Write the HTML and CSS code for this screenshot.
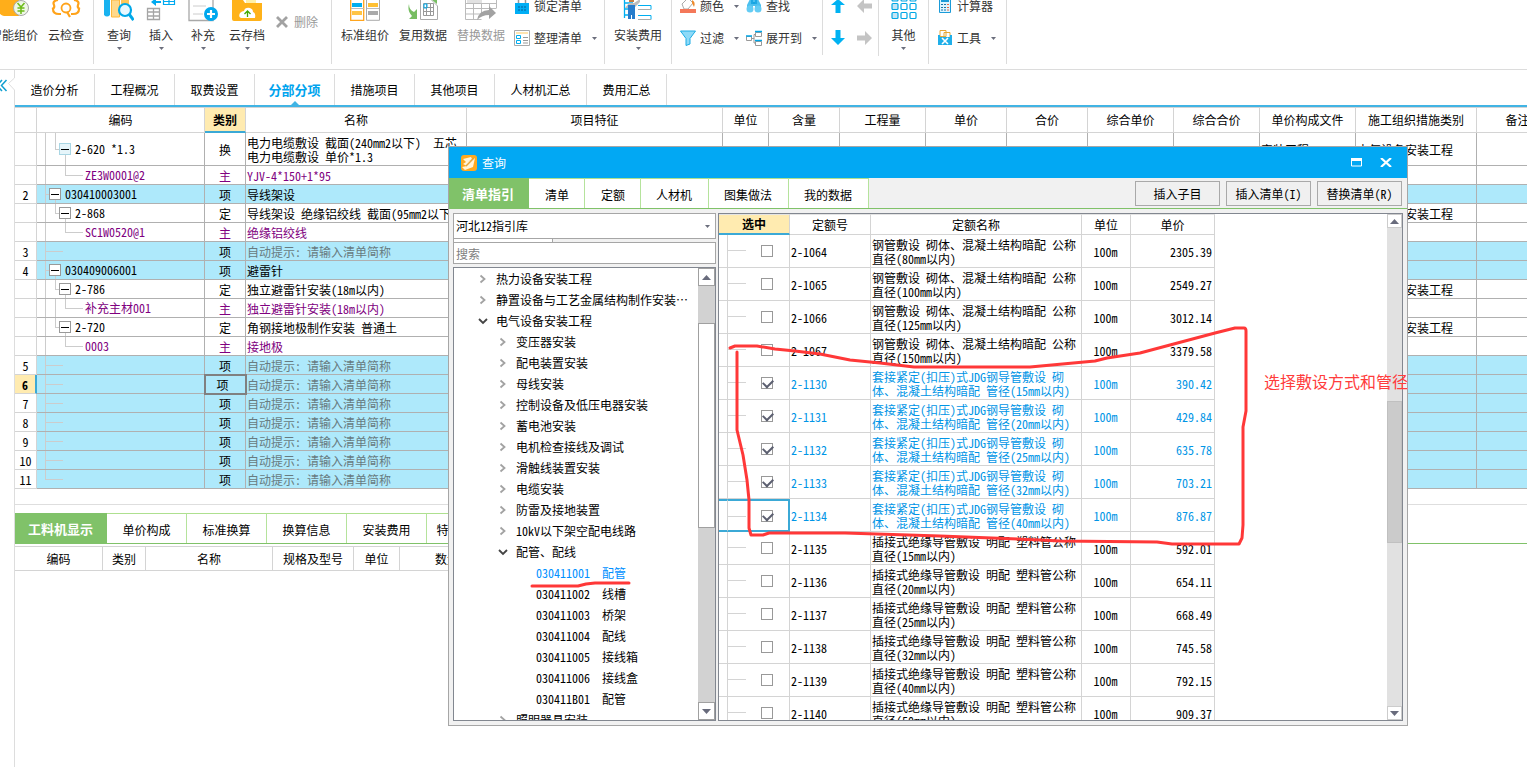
FILE: index.html
```html
<!DOCTYPE html>
<html lang="zh-CN">
<head>
<meta charset="utf-8">
<title>分部分项 - 查询</title>
<link rel="stylesheet" href="styles.css">
</head>
<body>
<svg class="defs" aria-hidden="true">
  <symbol id="down" viewBox="0 0 5 3"><path d="M0 0h5L2.500 3z" fill="#6b6e7c"/></symbol>
  <symbol id="chev" viewBox="0 0 8 10"><path d="M1.500 1.500L5.500 5l-4 3.500" fill="none" stroke="#a2a2a2" stroke-width="1.800"/></symbol>
  <symbol id="open" viewBox="0 0 10 8"><path d="M1 2l4 4 4-4" fill="none" stroke="#444" stroke-width="1.800"/></symbol>
  <symbol id="sb-up" viewBox="0 0 9 5"><path d="M4.500 0L9 5H0z" fill="#686b7c"/></symbol>
  <symbol id="sb-down" viewBox="0 0 9 5"><path d="M0 0h9L4.500 5z" fill="#686b7c"/></symbol>
</svg>

<header class="toolbar">
  <div class="group g-price">
    <button class="big"><svg width="30" height="22" viewBox="0 0 30 22"><path d="M0 0h20v16H7Q0 16 0 10z" fill="#ffae1a"/><circle cx="22" cy="8" r="7.500" fill="#eef7e6" stroke="#a8a8a8"/><path d="M18.500 3l3.500 4 3.500-4M22 7v7M18.500 8h7M18.500 11h7" fill="none" stroke="#6dbb1a" stroke-width="1.500"/></svg><span>智能组价</span></button>
    <button class="big"><svg width="32" height="22" viewBox="0 0 32 22"><path d="M8 0Q2 1 4 5q1 3-2 4M24 0q6 1 4 5-1 3 2 4M3 9q0 5 6 5h2M29 9q0 5-6 5h-2" fill="none" stroke="#ffa31a" stroke-width="2.200"/><circle cx="16" cy="8" r="4.500" fill="none" stroke="#ffa31a" stroke-width="1.800"/><path d="M17 12l3 5" stroke="#ffa31a" stroke-width="2.200"/></svg><span>云检查</span></button>
  </div>
  <div class="group g-edit">
    <button class="big"><svg width="30" height="22" viewBox="0 0 30 22"><path d="M0 0h6v15q-3 3-6 0z" fill="#18b2f0"/><path d="M7.500 0h8v17h-8z" fill="#ffd98c" stroke="#ffb83c"/><path d="M17 0h8v4h-8z" fill="#ffc859"/><circle cx="21" cy="10" r="6" fill="#e8f8ff" stroke="#00a8e8" stroke-width="2.200"/><path d="M25 14l4.500 6" stroke="#00a8e8" stroke-width="3"/></svg><span>查询</span><svg class="arr"><use href="#down"/></svg></button>
    <button class="big"><svg width="30" height="22" viewBox="0 0 30 22"><path d="M1.500 8.500h12v11h-12zM1.500 12h12M1.500 16h12M7.500 8v12" fill="#fff" stroke="#a5a5a5" stroke-width="1.300"/><path d="M5 2l5-4v3h5v2h-5v3z" fill="#00aaf0"/><path d="M17.500-1h11v5.500h-11zM17 1.500h12M23-1v5" fill="none" stroke="#00aaf0" stroke-width="1.200"/></svg><span>插入</span><svg class="arr"><use href="#down"/></svg></button>
    <button class="big"><svg width="30" height="22" viewBox="0 0 30 22"><path d="M1 0v20.500h24V0" fill="#fff" stroke="#a8a8a8" stroke-width="1.300"/><path d="M5 6h13M5 14h10" stroke="#ccc"/><circle cx="23" cy="14" r="7" fill="#00a8ee"/><path d="M19 14h8M23 10v8" stroke="#fff" stroke-width="2.200"/></svg><span>补充</span><svg class="arr"><use href="#down"/></svg></button>
    <button class="big cloud"><svg width="30" height="22" viewBox="0 0 30 22"><path d="M0 0h11l2 3h17v16q0 2-2 2H2q-2 0-2-2z" fill="#ffb219"/><path d="M14 0h10v3H14z" fill="#fff0a8"/><path d="M9 18q-3-1-1-5 2-2 4-2 1-4 6-3 3 1 3 4 3 1 2 6z" fill="#fff"/><path d="M15.500 17v-5M12.500 14l3-3 3 3" fill="none" stroke="#42a800" stroke-width="1.300"/></svg><span>云存档</span><svg class="arr"><use href="#down"/></svg></button>
    <button class="small muted del"><svg width="12" height="12" viewBox="0 0 12 12"><path d="M1 1l10 10M11 1L1 11" stroke="#a2a2a2" stroke-width="2.800"/></svg><span>删除</span></button>
  </div>
  <div class="group g-data">
    <button class="big"><svg width="30" height="22" viewBox="0 0 30 22"><path d="M.7-1h13v21.300H.7z" fill="#fff" stroke="#ffa51e" stroke-width="1.300"/><path d="M1 8.500h13M17 8.500h13" stroke="#bbb"/><path d="M2 3h10v4H2z" fill="#00aef0"/><path d="M2 11h10v4H2z" fill="#ffc445"/><path d="M16.500-1h13v21.300h-13z" fill="none" stroke="#aaa"/><path d="M18 11h10v4H18z" fill="#aaa"/><path d="M18 3h10v4H18z" fill="#ffc033"/></svg><span>标准组价</span></button>
    <button class="big"><svg width="30" height="22" viewBox="0 0 30 22"><path d="M12.500 0v19.500h17V6l-6-6" fill="#fff" stroke="#aaa"/><path d="M15.500 3.500h10v12h-10zM15.500 7.500h10M15.500 11.500h10M18.500 3v13M22.500 3v13" fill="none" stroke="#999"/><path d="M16 4h3v4h-3z" fill="none" stroke="#00aef0"/><path d="M1 4q0 6 5 8l3-3v10H1l3-3Q-1 11 1 4zM23-1l6 5V-1z" fill="#77bd62"/></svg><span>复用数据</span></button>
    <button class="big muted"><svg width="32" height="22" viewBox="0 0 32 22"><path d="M.5 0v19.500h16M.5 3.500h31M.5 8.500h31M.5 14h16M8.500 3v17M16.500 3v12M24.500 3v8M31.500 0v8" fill="none" stroke="#bbb"/><path d="M2-2h15v5H2z" fill="#e2e2e2"/><path d="M12 20q2-10 12-10V6l7 7-7 6v-4q-7 0-12 5z" fill="#a2a2a2"/></svg><span>替换数据</span></button>
    <div class="rows">
      <button class="small"><svg width="16" height="16" viewBox="0 0 16 16"><path d="M4.500 6V3q0-4 3.500-4t3.500 4v3" fill="none" stroke="#999" stroke-width="1.500"/><path d="M1 5h14v11H1z" fill="#00aef5"/><path d="M4 9h2m1 0h2m1 0h2M4 12h2m1 0h2m1 0h2" stroke="#075f98"/></svg><span>锁定清单</span></button>
      <button class="small"><svg width="16" height="16" viewBox="0 0 16 16"><path d="M.5.500h15v15H.5z" fill="#fff" stroke="#aaa"/><path d="M2 2h12v2H2z" fill="#ffe4b0"/><path d="M2.500 5.500h4v3h-4zM2.500 10.500h4v3h-4z" fill="#fff" stroke="#00aef0"/><path d="M9 7.500h5M9 10.500h5M9 13h5" stroke="#999"/></svg><span>整理清单</span><svg class="arr"><use href="#down"/></svg></button>
    </div>
  </div>
  <div class="group g-fee">
    <button class="big"><svg width="30" height="22" viewBox="0 0 30 22"><path d="M1.500 0v18M1 3h9M1 9h9M1 15h5" fill="none" stroke="#00aef0" stroke-width="1.300"/><path d="M15 5.500h13v4M15 15.500h13v4" fill="none" stroke="#00aef0"/><path d="M15 9.500h13M15 19.500h13" stroke="#aaa"/><path d="M6 0h5v2H6z" fill="#c67c3e"/><path d="M2 8l4-5h5l6-4v3l-6 6H4z" fill="#bcbcbc"/><path d="M5 5h7v14H9v-4H8v4H5z" fill="#267ccc"/></svg><span>安装费用</span><svg class="arr"><use href="#down"/></svg></button>
  </div>
  <div class="group g-find">
    <div class="rows">
      <button class="small"><svg width="16" height="14" viewBox="0 0 16 14"><path d="M2 5l6-6 5 5-5 6H4z" fill="#fff" stroke="#aaa"/><path d="M12 1q4 2 2 7l-2-4z" fill="#ef8a2b"/><path d="M0 10h16v4H0z" fill="#f4785a"/></svg><span>颜色</span><svg class="arr"><use href="#down"/></svg></button>
      <button class="small"><svg width="16" height="16" viewBox="0 0 16 16"><path d="M.5 1h15L10 8.500V14l-4 1.500v-7z" fill="#8edaf8" stroke="#1cabe4"/></svg><span>过滤</span><svg class="arr"><use href="#down"/></svg></button>
    </div>
    <div class="rows">
      <button class="small"><svg width="16" height="14" viewBox="0 0 16 14"><path d="M4 0h8l3 6v6H9V7H7v5H1V6z" fill="#4bc0ef"/><circle cx="4" cy="10" r="3.500" fill="#64ccf4"/><circle cx="12" cy="10" r="3.500" fill="#64ccf4"/><path d="M6 0v5M10 0v5M7 4h2" stroke="#079bdd" stroke-width="1.300"/></svg><span>查找</span></button>
      <button class="small"><svg width="16" height="16" viewBox="0 0 16 16"><path d="M.5 6.500h5v4h-5zM9.500 2.500h6v4h-6zM9.500 11.500h6v4h-6zM6 8.500h2v-4h1M8 8v5h1" fill="#fff" stroke="#999"/><path d="M0 6h6M9 1.500h7M9 10.500h7" stroke="#00a6e7" stroke-width="1.600"/></svg><span>展开到</span><svg class="arr"><use href="#down"/></svg></button>
    </div>
  </div>
  <div class="group short g-move">
    <button aria-label="上移"><svg width="14" height="14" viewBox="0 0 14 14"><path d="M7 0l7 6H9.500v8h-5V6H0z" fill="#00b2f2"/></svg></button>
    <button aria-label="左移"><svg width="15" height="14" viewBox="0 0 15 14"><path d="M0 7l7-7v4.500h8v5H7V14z" fill="#c4c4c4"/></svg></button>
    <button aria-label="下移"><svg width="14" height="16" viewBox="0 0 14 16"><path d="M4.500 0h5v8H14l-7 7-7-7h4.500z" fill="#00b2f2"/></svg></button>
    <button aria-label="右移"><svg width="15" height="14" viewBox="0 0 15 14"><path d="M15 7L8 0v4.500H0v5h8V14z" fill="#c4c4c4"/></svg></button>
  </div>
  <div class="group g-other">
    <button class="big"><svg width="26" height="22" viewBox="0 0 26 22"><g fill="#c3e5f5" stroke="#00a7e5" stroke-width="1.200"><rect x="1" y="-5" width="6" height="6" rx="1"/><rect x="1" y="3.500" width="6" height="6" rx="1"/><rect x="1" y="12.500" width="6" height="6" rx="1"/></g><g fill="#fff" stroke="#00a7e5" stroke-width="1.200"><rect x="10" y="-5" width="6" height="6" rx="1"/><rect x="19" y="-5" width="6" height="6" rx="1"/><rect x="10" y="3.500" width="6" height="6" rx="1"/><rect x="19" y="3.500" width="6" height="6" rx="1"/><rect x="10" y="12.500" width="6" height="6" rx="1"/><rect x="19" y="12.500" width="6" height="6" rx="1"/></g></svg><span>其他</span><svg class="arr"><use href="#down"/></svg></button>
  </div>
  <div class="group g-tools">
    <div class="rows">
      <button class="small"><svg width="16" height="14" viewBox="0 0 16 14"><path d="M2.500-2h11v15.500h-11z" fill="#ddf4ff" stroke="#1b9bd8"/><path d="M4 2h8" stroke="#1b9bd8" stroke-width="2"/><path d="M4 5.500h2m1 0h2M4 8.500h2m1 0h2M4 11h2m1 0h2" stroke="#1b75a8"/><path d="M10 5.500h2M10 8.500h2M10 11h2" stroke="#ee6541"/></svg><span>计算器</span></button>
      <button class="small"><svg width="16" height="16" viewBox="0 0 16 16"><path d="M3 .5h6v6H3zM7 2.500h6v5H7z" fill="#fff" stroke="#e8a637"/><path d="M1 5h2v2h10V5h2v10H1z" fill="#20afe9"/><path d="M5 8l6 6M11 8l-6 6" stroke="#fff" stroke-width="1.600"/></svg><span>工具</span><svg class="arr"><use href="#down"/></svg></button>
    </div>
  </div>
</header>

<div class="workspace">
  <button class="rail" aria-label="收起"><svg width="15" height="34" viewBox="0 0 15 34"><path d="M2 10l-5 5.500L2 21M6.500 10l-5 5.500 5 5.500" fill="none" stroke="#0f9fd0" stroke-width="1.500"/><path d="M14.500 0v8l-6 5.500 6 6.500v14" fill="#fff" stroke="#ddd"/></svg></button>
  <main class="content">
    <nav class="tabs">
      <a href="#">造价分析</a><a href="#">工程概况</a><a href="#">取费设置</a><a href="#" class="active">分部分项</a><a href="#">措施项目</a><a href="#">其他项目</a><a href="#" class="wide">人材机汇总</a><a href="#">费用汇总</a>
    </nav>
    <div class="grid-wrap">
    <table class="grid">
      <colgroup><col class="w-num"><col class="w-code"><col class="w-type"><col class="w-name"><col class="w-feat"><col class="w-unit"><col class="w-cont"><col class="w-86"><col class="w-81"><col class="w-81"><col class="w-86"><col class="w-86"><col class="w-file"><col class="w-kind"><col class="w-note"></colgroup>
      <thead><tr><th></th><th>编码</th><th class="current">类别</th><th>名称</th><th>项目特征</th><th>单位</th><th>含量</th><th>工程量</th><th>单价</th><th>合价</th><th>综合单价</th><th>综合合价</th><th>单价构成文件</th><th>施工组织措施类别</th><th>备注</th></tr></thead>
      <tbody>
        <tr class="tall"><td></td><td><div class="tree lv2"><button class="toggle soft">−</button>2-620 *1.3</div></td><td>换</td><td class="pre">电力电缆敷设 截面(240mm2以下)  五芯
电力电缆敷设 单价*1.3</td><td></td><td></td><td></td><td></td><td></td><td></td><td></td><td></td><td>安装工程</td><td>电气设备安装工程</td><td></td></tr>
        <tr class="mat"><td></td><td><div class="tree lv3">ZE3W0001@2</div></td><td>主</td><td>YJV-4*150+1*95</td><td></td><td></td><td></td><td></td><td></td><td></td><td></td><td></td><td></td><td></td><td></td></tr>
        <tr class="item"><td>2</td><td><div class="tree lv1"><button class="toggle">−</button>030410003001</div></td><td>项</td><td>导线架设</td><td></td><td></td><td></td><td></td><td></td><td></td><td></td><td></td><td></td><td></td><td></td></tr>
        <tr><td></td><td><div class="tree lv2"><button class="toggle">−</button>2-868</div></td><td>定</td><td>导线架设 绝缘铝绞线 截面(95mm2以下)</td><td></td><td></td><td></td><td></td><td></td><td></td><td></td><td></td><td>安装工程</td><td>电气设备安装工程</td><td></td></tr>
        <tr class="mat"><td></td><td><div class="tree lv3">SC1W0520@1</div></td><td>主</td><td>绝缘铝绞线</td><td></td><td></td><td></td><td></td><td></td><td></td><td></td><td></td><td></td><td></td><td></td></tr>
        <tr class="item hint"><td>3</td><td><div class="tree leaf"></div></td><td>项</td><td>自动提示: 请输入清单简称</td><td></td><td></td><td></td><td></td><td></td><td></td><td></td><td></td><td></td><td></td><td></td></tr>
        <tr class="item"><td>4</td><td><div class="tree lv1"><button class="toggle">−</button>030409006001</div></td><td>项</td><td>避雷针</td><td></td><td></td><td></td><td></td><td></td><td></td><td></td><td></td><td></td><td></td><td></td></tr>
        <tr><td></td><td><div class="tree lv2"><button class="toggle">−</button>2-786</div></td><td>定</td><td>独立避雷针安装(18m以内)</td><td></td><td></td><td></td><td></td><td></td><td></td><td></td><td></td><td>安装工程</td><td>电气设备安装工程</td><td></td></tr>
        <tr class="mat"><td></td><td><div class="tree lv3 more">补充主材001</div></td><td>主</td><td>独立避雷针安装(18m以内)</td><td></td><td></td><td></td><td></td><td></td><td></td><td></td><td></td><td></td><td></td><td></td></tr>
        <tr><td></td><td><div class="tree lv2"><button class="toggle">−</button>2-720</div></td><td>定</td><td>角钢接地极制作安装 普通土</td><td></td><td></td><td></td><td></td><td></td><td></td><td></td><td></td><td>安装工程</td><td>电气设备安装工程</td><td></td></tr>
        <tr class="mat"><td></td><td><div class="tree lv3">0003</div></td><td>主</td><td>接地极</td><td></td><td></td><td></td><td></td><td></td><td></td><td></td><td></td><td></td><td></td><td></td></tr>
        <tr class="item hint"><td>5</td><td><div class="tree leaf"></div></td><td>项</td><td>自动提示: 请输入清单简称</td><td></td><td></td><td></td><td></td><td></td><td></td><td></td><td></td><td></td><td></td><td></td></tr>
        <tr class="item hint"><td class="current">6</td><td><div class="tree leaf"></div></td><td class="focus">项</td><td>自动提示: 请输入清单简称</td><td></td><td></td><td></td><td></td><td></td><td></td><td></td><td></td><td></td><td></td><td></td></tr>
        <tr class="item hint"><td>7</td><td><div class="tree leaf"></div></td><td>项</td><td>自动提示: 请输入清单简称</td><td></td><td></td><td></td><td></td><td></td><td></td><td></td><td></td><td></td><td></td><td></td></tr>
        <tr class="item hint"><td>8</td><td><div class="tree leaf"></div></td><td>项</td><td>自动提示: 请输入清单简称</td><td></td><td></td><td></td><td></td><td></td><td></td><td></td><td></td><td></td><td></td><td></td></tr>
        <tr class="item hint"><td>9</td><td><div class="tree leaf"></div></td><td>项</td><td>自动提示: 请输入清单简称</td><td></td><td></td><td></td><td></td><td></td><td></td><td></td><td></td><td></td><td></td><td></td></tr>
        <tr class="item hint"><td>10</td><td><div class="tree leaf"></div></td><td>项</td><td>自动提示: 请输入清单简称</td><td></td><td></td><td></td><td></td><td></td><td></td><td></td><td></td><td></td><td></td><td></td></tr>
        <tr class="item hint"><td>11</td><td><div class="tree leaf last"></div></td><td>项</td><td>自动提示: 请输入清单简称</td><td></td><td></td><td></td><td></td><td></td><td></td><td></td><td></td><td></td><td></td><td></td></tr>
      </tbody>
    </table>
    </div>
    <section class="lower">
      <nav class="gtabs">
        <a href="#" class="active">工料机显示</a><a href="#">单价构成</a><a href="#">标准换算</a><a href="#">换算信息</a><a href="#">安装费用</a><a href="#">特征及内容</a>
      </nav>
      <table class="sub">
        <thead><tr><th class="s87">编码</th><th class="s43">类别</th><th class="s127">名称</th><th class="s81">规格及型号</th><th class="s46">单位</th><th class="s96">数量</th></tr></thead>
      </table>
    </section>
  </main>
</div>

<section class="dialog" role="dialog" aria-label="查询">
  <div class="titlebar">
    <svg width="16" height="16" viewBox="0 0 16 16"><rect width="16" height="16" rx="3" fill="#ffa91f"/><path d="M2 4l8-2 1 2-4 3 7-4-2 9-8 3-3-3 5-1-4-2 3-2z" fill="#fff4d7"/><path d="M5 11l8-8" stroke="#e7a43c" stroke-width="1.500"/></svg>
    <span>查询</span>
    <button aria-label="最大化"><svg width="11" height="9" viewBox="0 0 11 9"><path d="M.5.500h10v7.500H.5z" fill="none" stroke="#fff"/><path d="M0 0h11v3H0z" fill="#fff"/></svg></button>
    <button aria-label="关闭"><svg width="12" height="9" viewBox="0 0 12 9"><path d="M1 0l10 9M11 0L1 9" stroke="#fff" stroke-width="2.200"/></svg></button>
  </div>
  <div class="dbar">
    <nav class="gtabs">
      <a href="#" class="active">清单指引</a><a href="#">清单</a><a href="#">定额</a><a href="#">人材机</a><a href="#">图集做法</a><a href="#">我的数据</a>
    </nav>
    <div class="actions"><button>插入子目</button><button>插入清单(I)</button><button>替换清单(R)</button></div>
  </div>
  <div class="dbody">
    <div class="side">
      <label class="library"><select aria-label="指引库"><option>河北12指引库</option></select><svg class="arr"><use href="#down"/></svg></label>
      <div class="strip"></div>
      <input class="search" type="text" placeholder="搜索" aria-label="搜索">
      <div class="pane">
        <ul class="outline">
          <li class="d1"><svg><use href="#chev"/></svg>热力设备安装工程</li>
          <li class="d1"><svg><use href="#chev"/></svg>静置设备与工艺金属结构制作安装⋯</li>
          <li class="d1"><svg><use href="#open"/></svg>电气设备安装工程</li>
          <li class="d2"><svg><use href="#chev"/></svg>变压器安装</li>
          <li class="d2"><svg><use href="#chev"/></svg>配电装置安装</li>
          <li class="d2"><svg><use href="#chev"/></svg>母线安装</li>
          <li class="d2"><svg><use href="#chev"/></svg>控制设备及低压电器安装</li>
          <li class="d2"><svg><use href="#chev"/></svg>蓄电池安装</li>
          <li class="d2"><svg><use href="#chev"/></svg>电机检查接线及调试</li>
          <li class="d2"><svg><use href="#chev"/></svg>滑触线装置安装</li>
          <li class="d2"><svg><use href="#chev"/></svg>电缆安装</li>
          <li class="d2"><svg><use href="#chev"/></svg>防雷及接地装置</li>
          <li class="d2"><svg><use href="#chev"/></svg>10kV以下架空配电线路</li>
          <li class="d2"><svg><use href="#open"/></svg>配管、配线</li>
          <li class="d3 picked"><span>030411001</span>配管</li>
          <li class="d3"><span>030411002</span>线槽</li>
          <li class="d3"><span>030411003</span>桥架</li>
          <li class="d3"><span>030411004</span>配线</li>
          <li class="d3"><span>030411005</span>接线箱</li>
          <li class="d3"><span>030411006</span>接线盒</li>
          <li class="d3"><span>030411B01</span>配管</li>
          <li class="d2"><svg><use href="#chev"/></svg>照明器具安装</li>
        </ul>
        <div class="scroll dark"><button aria-label="向上"><svg><use href="#sb-up"/></svg></button><i class="thumb"></i><button aria-label="向下"><svg><use href="#sb-down"/></svg></button></div>
      </div>
    </div>
    <div class="pane quota-pane">
      <div class="quota-wrap">
      <table class="quota">
        <colgroup><col class="q-edge"><col class="q-pick"><col class="q-no"><col class="q-name"><col class="q-unit"><col class="q-price"></colgroup>
        <thead><tr><th colspan="2" class="current">选中</th><th>定额号</th><th>定额名称</th><th>单位</th><th>单价</th></tr></thead>
        <tbody>
          <tr><td></td><td class="q-check"><input type="checkbox" aria-label="2-1064"></td><td>2-1064</td><td>钢管敷设 砌体、混凝土结构暗配 公称<br>直径(80mm以内)</td><td>100m</td><td>2305.39</td></tr>
          <tr><td></td><td class="q-check"><input type="checkbox" aria-label="2-1065"></td><td>2-1065</td><td>钢管敷设 砌体、混凝土结构暗配 公称<br>直径(100mm以内)</td><td>100m</td><td>2549.27</td></tr>
          <tr><td></td><td class="q-check"><input type="checkbox" aria-label="2-1066"></td><td>2-1066</td><td>钢管敷设 砌体、混凝土结构暗配 公称<br>直径(125mm以内)</td><td>100m</td><td>3012.14</td></tr>
          <tr><td></td><td class="q-check"><input type="checkbox" aria-label="2-1067"></td><td>2-1067</td><td>钢管敷设 砌体、混凝土结构暗配 公称<br>直径(150mm以内)</td><td>100m</td><td>3379.58</td></tr>
          <tr class="on"><td></td><td class="q-check"><input type="checkbox" checked aria-label="2-1130"></td><td>2-1130</td><td>套接紧定(扣压)式JDG钢导管敷设 砌<br>体、混凝土结构暗配 管径(15mm以内)</td><td>100m</td><td>390.42</td></tr>
          <tr class="on"><td></td><td class="q-check"><input type="checkbox" checked aria-label="2-1131"></td><td>2-1131</td><td>套接紧定(扣压)式JDG钢导管敷设 砌<br>体、混凝土结构暗配 管径(20mm以内)</td><td>100m</td><td>429.84</td></tr>
          <tr class="on"><td></td><td class="q-check"><input type="checkbox" checked aria-label="2-1132"></td><td>2-1132</td><td>套接紧定(扣压)式JDG钢导管敷设 砌<br>体、混凝土结构暗配 管径(25mm以内)</td><td>100m</td><td>635.78</td></tr>
          <tr class="on"><td></td><td class="q-check"><input type="checkbox" checked aria-label="2-1133"></td><td>2-1133</td><td>套接紧定(扣压)式JDG钢导管敷设 砌<br>体、混凝土结构暗配 管径(32mm以内)</td><td>100m</td><td>703.21</td></tr>
          <tr class="on focused"><td></td><td class="q-check"><input type="checkbox" checked aria-label="2-1134"></td><td>2-1134</td><td>套接紧定(扣压)式JDG钢导管敷设 砌<br>体、混凝土结构暗配 管径(40mm以内)</td><td>100m</td><td>876.87</td></tr>
          <tr><td></td><td class="q-check"><input type="checkbox" aria-label="2-1135"></td><td>2-1135</td><td>插接式绝缘导管敷设 明配 塑料管公称<br>直径(15mm以内)</td><td>100m</td><td>592.01</td></tr>
          <tr><td></td><td class="q-check"><input type="checkbox" aria-label="2-1136"></td><td>2-1136</td><td>插接式绝缘导管敷设 明配 塑料管公称<br>直径(20mm以内)</td><td>100m</td><td>654.11</td></tr>
          <tr><td></td><td class="q-check"><input type="checkbox" aria-label="2-1137"></td><td>2-1137</td><td>插接式绝缘导管敷设 明配 塑料管公称<br>直径(25mm以内)</td><td>100m</td><td>668.49</td></tr>
          <tr><td></td><td class="q-check"><input type="checkbox" aria-label="2-1138"></td><td>2-1138</td><td>插接式绝缘导管敷设 明配 塑料管公称<br>直径(32mm以内)</td><td>100m</td><td>745.58</td></tr>
          <tr><td></td><td class="q-check"><input type="checkbox" aria-label="2-1139"></td><td>2-1139</td><td>插接式绝缘导管敷设 明配 塑料管公称<br>直径(40mm以内)</td><td>100m</td><td>792.15</td></tr>
          <tr><td></td><td class="q-check"><input type="checkbox" aria-label="2-1140"></td><td>2-1140</td><td>插接式绝缘导管敷设 明配 塑料管公称<br>直径(50mm以内)</td><td>100m</td><td>909.37</td></tr>
        </tbody>
      </table>
      </div>
      <div class="scroll"><button aria-label="向上"><svg><use href="#sb-up"/></svg></button><i class="thumb"></i><button aria-label="向下"><svg><use href="#sb-down"/></svg></button></div>
    </div>
  </div>
</section>

<svg class="marks" width="720" height="280" viewBox="530 320 720 280" aria-hidden="true">
  <g fill="none" stroke="#ff3838" stroke-width="3" stroke-linecap="round" stroke-linejoin="round">
    <path d="M730 348L735 346H757L775 349L795 351L820 354L850 360L880 363L914 367H1030L1095 361L1107 358L1140 353L1170 345L1215 333L1235 328H1244Q1246 328 1246 331V411L1243 427V525L1242 538L1239 544H1172L1157 542L1060 541L1040 540L940 536L845 533H769L763 535H751L749 528V500L747 480L743 455L737 430V352"/>
    <path d="M532 586H578L586 584L595 583H629"/>
  </g>
</svg>
<p class="note">选择敷设方式和管径</p>
</body>
</html>
```
FILE: styles.css
```css
* { box-sizing: border-box; }

html, body { height: 100%; }

body {
  margin: 0;
  overflow: hidden;
  display: flex;
  flex-direction: column;
  background: #fff;
  color: #000;
  font: 12px/14px "Noto Sans Mono CJK SC", "Noto Sans CJK SC", "Liberation Mono", monospace;
}

button, input, select { font: inherit; color: inherit; margin: 0; padding: 0; border: 0; border-radius: 0; background: none; }
a { color: inherit; text-decoration: none; }
svg { display: block; flex: none; }
.defs { position: absolute; width: 0; height: 0; }
.arr { width: 5px; height: 3px; }

/* toolbar */
.toolbar {
  display: flex;
  align-items: flex-start;
  flex: none;
  height: 70px;
  overflow: hidden;
  border-bottom: 1px solid #dcdcdc;
  color: #333;
  font-family: "Noto Sans CJK SC", sans-serif;
}
.group { display: flex; align-items: flex-start; flex: none; height: 64px; border-right: 1px solid #dcdcdc; }
.group.short { height: 56px; }
.g-price { width: 94px; }
.g-edit { width: 238px; padding-left: 4px; }
.g-data { width: 273px; padding-left: 4px; }
.g-fee { width: 67px; }
.g-find { width: 151px; height: 55px; padding-left: 8px; }
.g-move { width: 56px; }
.g-other { width: 50px; }
.g-tools { width: 78px; padding-left: 8px; }
.big { display: flex; flex-direction: column; align-items: center; flex: none; width: 42px; white-space: nowrap; }
.big > span { height: 24px; line-height: 26px; }
.big .arr { margin-top: 1px; }
.g-price .big { width: 52px; }
.g-price .big:first-child { margin-left: -12px; }
.big.cloud { width: 46px; }
.g-data .big { width: 58px; }
.g-fee .big, .g-other .big { width: 100%; }
.muted { color: #999; }
.small { display: flex; align-items: center; gap: 4px; height: 32px; white-space: nowrap; }
.small .arr { margin-left: 6px; }
.del { height: 44px; gap: 6px; margin-left: 6px; }
.rows { display: flex; flex-direction: column; }
.rows .small:first-child { height: 22px; padding-bottom: 10px; }
.g-data .rows { padding-left: 4px; }
.g-find .rows { width: 66px; }
.g-move { display: grid; grid-template-columns: 1fr 1fr; grid-template-rows: 22px 34px; }
.g-move button { display: flex; justify-content: center; align-items: center; height: 32px; }
.g-move button:nth-child(-n+2) { height: 22px; padding-bottom: 10px; }
.g-move button:nth-child(odd) { padding-left: 2px; }

/* workspace */
.workspace { display: flex; flex: 1; min-height: 0; }
.rail { width: 15px; flex: none; display: flex; align-items: flex-start; background: linear-gradient(#ddd, #ddd) 14px 34px / 1px 100% no-repeat; }
.content { flex: 1; min-width: 0; display: flex; flex-direction: column; }
.tabs { display: flex; height: 37px; padding-top: 4px; flex: none; border-bottom: 2px solid #41b4e4; }
.tabs a { position: relative; width: 80px; line-height: 32px; text-align: center; border-right: 1px solid #dcdcdc; }
.tabs .wide { width: 92px; }
.tabs .active { color: #00a4ee; font-size: 13px; font-weight: bold; }
.tabs .active::after { content: ""; position: absolute; left: 50%; bottom: 0; margin-left: -4px; border: 4px solid transparent; border-top: 0; border-bottom-color: #41b4e4; }

.grid-wrap { overflow: hidden; flex: none; }
table { border-collapse: separate; border-spacing: 0; table-layout: fixed; }
th, td { padding: 0; font-weight: normal; }
.grid { width: 1544px; }
.w-num { width: 22px; }
.w-code { width: 168px; }
.w-type { width: 41px; }
.w-name { width: 221px; }
.w-feat { width: 256px; }
.w-unit { width: 46px; }
.w-cont { width: 71px; }
.w-86 { width: 86px; }
.w-81 { width: 81px; }
.w-file { width: 96px; }
.w-kind { width: 121px; }
.w-note { width: 82px; }
.grid th { height: 26px; border: 1px solid #d4d4d4; border-left: 0; }
.grid th.current, .quota th.current { background: #ffebb0; border-bottom: 2px solid #3ba9d6; font-weight: bold; }
.grid td { height: 19px; padding: 2px 1px 0; border-right: 1px solid #b0b0b0; border-bottom: 1px solid #b0b0b0; line-height: 14px; white-space: nowrap; overflow: hidden; }
.grid td:first-child { background: #fff; color: #000; text-align: center; border-color: #d4d4d4; }
.grid td:nth-child(2) { padding: 0; }
.grid td:nth-child(3) { text-align: center; }
.grid .tall td { height: 33px; }
.grid td.pre { white-space: pre; }
.grid .item td { background: #aee9fb; }
.grid .item td:first-child { background: #fff; }
.mat td { color: #800080; }
.hint td:nth-child(4) { color: #687b80; }
.grid .item td.current { background: #ffebb0; border-right: 2px solid #3ba9d6; font-weight: bold; }
.grid td.focus { outline: 2px solid #808080; outline-offset: -1px; padding-right: 6px; }

.tree {
  --c: linear-gradient(#ccc, #ccc);
  --mid: 9px;
  display: flex;
  align-items: center;
  gap: 4px;
  height: 18px;
  background-repeat: no-repeat;
}
.tall .tree { --mid: 16px; height: 32px; }
.lv1 { padding-left: 12px; background-image: var(--c), var(--c), var(--c); background-size: 1px 100%, 4px 1px, 1px 50%; background-position: 8px 0, 8px var(--mid), 18px 100%; }
.lv2 { padding-left: 22px; background-image: var(--c), var(--c), var(--c), var(--c); background-size: 1px 100%, 1px var(--mid), 4px 1px, 1px 50%; background-position: 8px 0, 18px 0, 18px var(--mid), 28px 100%; }
.lv3 { padding-left: 48px; background-image: var(--c), var(--c), var(--c), var(--c); background-size: 1px 100%, 1px var(--mid), 18px 1px, 0 0; background-position: 8px 0, 28px 0, 28px var(--mid), 18px 0; }
.lv3.more { background-size: 1px 100%, 1px var(--mid), 18px 1px, 1px 100%; }
.leaf { background-image: var(--c), var(--c); background-size: 1px 100%, 18px 1px; background-position: 8px 0, 8px var(--mid); }
.leaf.last { background-size: 1px var(--mid), 18px 1px; }
.toggle { width: 12px; height: 12px; border: 1px solid #999; background: linear-gradient(#000, #000) center / 8px 1px no-repeat #fff; color: transparent; font-size: 8px; line-height: 8px; overflow: hidden; }
.toggle.soft { border-color: #a9d6e4; background-color: #e6f5fa; }

/* lower panel */
.lower { margin-top: 15px; padding-top: 9px; border-top: 1px solid #dedede; }
.gtabs { display: flex; }
.gtabs a { padding: 0 20px; line-height: 32px; text-align: center; background: #fff; border-top: 1px solid #aee08f; border-right: 1px solid #b5e39c; white-space: nowrap; }
.gtabs .active { background: #80c269; border-color: #80c269; color: #fff; font-size: 13px; font-weight: bold; line-height: 30px; }
.lower .gtabs { height: 31px; margin-top: -1px; border-bottom: 1px solid #80c269; overflow: hidden; }
.lower .gtabs a { padding: 0; width: 80px; }
.lower .gtabs .active { width: 92px; }
.sub { width: 480px; margin-top: 2px; }
.sub th { height: 25px; border: 1px solid #d4d4d4; border-left: 0; }
.s87 { width: 88px; }
.s43 { width: 43px; }
.s127 { width: 127px; }
.s81 { width: 81px; }
.s46 { width: 46px; }
.s96 { width: 95px; }

/* query window */
.dialog { position: absolute; left: 448px; top: 146px; width: 960px; height: 580px; display: flex; flex-direction: column; background: #f1f1f1; border: 1px solid #a6a6a6; }
.titlebar { display: flex; align-items: center; gap: 5px; height: 31px; padding: 0 15px 0 12px; background: #02a8f3; color: #fff; font-family: "Noto Sans CJK SC", sans-serif; }
.titlebar span { flex: 1; }
.titlebar button { margin-left: 13px; }
.dbar { display: flex; justify-content: space-between; height: 31px; border-bottom: 1px solid #80c269; }
.dbar .gtabs { height: 30px; }
.dbar .gtabs a { padding: 0 15px 0 16px; line-height: 32px; }
.dbar .gtabs a:first-child { padding: 0 14px 0 13px; line-height: 30px; }
.dbar .gtabs a:nth-child(n+4) { padding: 0 16px 0 15px; }
.actions { display: flex; gap: 6px; padding: 3px 5px 0 0; }
.actions button { width: 85px; height: 25px; border: 1px solid #a9a9a9; background: #f0f0f0; }
.dbody { display: flex; flex: 1; gap: 2px; padding: 4px; min-height: 0; }
.side { display: flex; flex-direction: column; width: 263px; }
.library { display: flex; align-items: center; height: 26px; padding-right: 5px; background: #fff; border: 1px solid #a6a6a6; }
.library select { appearance: none; flex: 1; height: 24px; padding-left: 2px; outline: 0; }
.strip { width: 100px; height: 3px; background: #fff; border-left: 1px solid #a6a6a6; border-right: 1px solid #a6a6a6; }
.search { height: 22px; padding: 0 2px; background: #fff; border: 1px solid #a6a6a6; }
.search::placeholder { color: #808080; opacity: 1; }
.pane { display: flex; min-height: 0; background: #fff; border: 1px solid #828790; overflow: hidden; }
.side .pane { flex: 1; margin-top: 3px; }
.outline { flex: 1; min-width: 0; margin: 0; padding: 0; list-style: none; overflow: hidden; }
.outline li { display: flex; align-items: center; height: 21px; white-space: nowrap; }
.outline svg { width: 10px; height: 10px; margin-right: 8px; }
.d1 { padding-left: 24px; }
.d2 { padding-left: 44px; }
.d3 { padding-left: 82px; }
.outline .d3 span { width: 66px; }
.picked { color: #0090ff; }
.scroll { display: flex; flex-direction: column; flex: none; width: 15px; background: #e1e1e1; }
.scroll button { display: flex; align-items: center; justify-content: center; width: 100%; height: 14px; background: #fff; border: 1px solid #ccc; flex: none; }
.scroll button svg { width: 9px; height: 5px; }
.scroll .thumb { height: 142px; margin: 173px 0 auto; background: #cbcbcb; border: 1px solid #c0c0c0; }
.scroll.dark { width: 17px; background: #d2d2d2; }
.scroll.dark button { height: 18px; border-color: #a0a0a0; }
.scroll.dark .thumb { height: 205px; margin-top: 37px; background: #fff; border: 1px solid #a0a0a0; }
.quota-pane { flex: 1; }
.quota-wrap { flex: 1; overflow: hidden; }
.quota { width: 496px; }
.quota th { height: 21px; border-right: 1px solid #d4d4d4; border-bottom: 1px solid #d4d4d4; border-top: 1px solid #e4e4e4; }
.quota td { height: 33px; padding: 2px 2px 0 1px; border-right: 1px solid #d4d4d4; border-bottom: 1px solid #d4d4d4; line-height: 14px; white-space: nowrap; }
.quota td:nth-child(5) { text-align: center; }
.quota td:nth-child(6) { text-align: right; }
.q-edge { width: 9px; }
.q-pick { width: 62px; }
.q-no { width: 81px; }
.q-name { width: 211px; }
.q-unit { width: 49px; }
.q-price { width: 84px; }
.quota .q-check { padding: 0 0 0 33px; background: linear-gradient(#d4d4d4, #d4d4d4) 0 15px / 18px 1px no-repeat; }
.q-check input { appearance: none; display: block; position: relative; width: 12px; height: 12px; border: 1px solid #999; background: #fff; }
.q-check input:checked::after { content: ""; position: absolute; left: 1px; top: 1px; width: 8px; height: 5px; border: 2px solid #5c5f70; border-top: 0; border-right: 0; transform: rotate(-45deg); }
.on td { color: #0095e6; }
.focused td:first-child { border: 2px solid #3ba9d6; border-left: 0; border-right: 1px solid #d4d4d4; }
.quota .focused .q-check { border: 2px solid #3ba9d6; border-left: 0; }

/* hand-drawn marks over the window */
.marks { position: absolute; left: 530px; top: 320px; pointer-events: none; }
.note { position: absolute; left: 1264px; top: 372px; margin: 0; color: #ff3c3c; font-size: 16px; line-height: 18px; white-space: nowrap; }
```
